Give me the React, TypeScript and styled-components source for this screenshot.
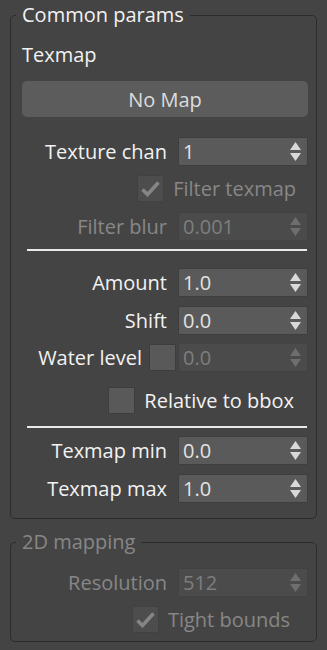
import React from 'react';
import styled, { createGlobalStyle } from 'styled-components';

const Global = createGlobalStyle`
  html, body { margin: 0; padding: 0; background: #444444; }
  body {
    font-family: "Open Sans", "Noto Sans", sans-serif;
    font-size: 20px;
    color: #f2f2f2;
  }
  * { box-sizing: border-box; }
`;

const Panel = styled.div`
  display: flex;
  flex-direction: column;
  gap: 12px;
  padding: 4px 10px 0;
`;

const Group = styled.fieldset<{ $pb: number }>`
  margin: 0;
  min-width: 0;
  border: 1px solid #2c2c2c;
  border-radius: 5px;
  padding: 15px 8px ${(p) => p.$pb}px 11px;
  display: flex;
  flex-direction: column;
  gap: 9px;
`;

const Legend = styled.legend<{ $dim?: boolean }>`
  padding: 0 6px;
  margin-left: -6px;
  line-height: 22px;
  color: ${(p) => (p.$dim ? '#878787' : '#f2f2f2')};
`;

const Heading = styled.div`
  line-height: 27px;
  color: #f2f2f2;
`;

const MapButton = styled.button`
  margin-top: 4px;
  height: 36px;
  width: 100%;
  border: none;
  border-radius: 5px;
  background: #5c5c5c;
  color: #dcdcdc;
  font: inherit;
  padding: 0;
`;

const Row = styled.div<{ $mt?: number; $tight?: boolean }>`
  display: grid;
  grid-template-columns: 1fr 130px;
  column-gap: ${(p) => (p.$tight ? 2 : 11)}px;
  align-items: center;
  height: 29px;
  margin-top: ${(p) => p.$mt ?? 0}px;
`;

const Label = styled.div<{ $dim?: boolean }>`
  display: flex;
  justify-content: flex-end;
  align-items: center;
  gap: 7px;
  white-space: nowrap;
  color: ${(p) => (p.$dim ? '#878787' : '#f2f2f2')};
`;

const SpinBox = styled.div<{ $dim?: boolean }>`
  display: flex;
  align-items: center;
  height: 29px;
  background: ${(p) => (p.$dim ? '#4b4b4b' : '#5a5a5a')};
  border: 1px solid ${(p) => (p.$dim ? '#424242' : '#3e3e3e')};
  border-radius: 2px;
  padding: 0 6px 0 4px;
  color: ${(p) => (p.$dim ? '#7e7e7e' : '#e2e2e2')};
`;

const SpinValue = styled.span`
  flex: 1;
  line-height: 27px;
`;

const Arrows = styled.svg`
  flex: none;
  display: block;
`;

const CheckRow = styled.label<{ $mt?: number; $pr: number }>`
  display: flex;
  justify-content: flex-end;
  align-items: center;
  gap: 9px;
  height: 27px;
  padding-right: ${(p) => p.$pr}px;
  margin-top: ${(p) => p.$mt ?? 0}px;
`;

const CheckText = styled.span<{ $dim?: boolean }>`
  color: ${(p) => (p.$dim ? '#878787' : '#f2f2f2')};
  white-space: nowrap;
`;

const Box = styled.span<{ $dim?: boolean }>`
  flex: none;
  width: 27px;
  height: 27px;
  display: flex;
  align-items: center;
  justify-content: center;
  background: ${(p) => (p.$dim ? '#4d4d4d' : '#595959')};
  border: 1px solid ${(p) => (p.$dim ? '#414141' : '#3d3d3d')};
  border-radius: 1px;
`;

const Separator = styled.div<{ $mt?: number }>`
  height: 2px;
  margin: ${(p) => p.$mt ?? 0}px 1px 0 5px;
  background: #e9e9e9;
`;

const Check = ({ color }: { color: string }) => (
  <svg width="19" height="17" viewBox="0 0 19 17">
    <path d="M1.5 9.5 L6.5 14.5 L17.5 2.5" fill="none" stroke={color} strokeWidth="3.6" strokeLinejoin="miter" />
  </svg>
);

const Spinner = ({ value, dim }: { value: string; dim?: boolean }) => {
  const c = dim ? '#6e6e6e' : '#d8d8d8';
  return (
    <SpinBox $dim={dim}>
      <SpinValue>{value}</SpinValue>
      <Arrows width="11" height="20" viewBox="0 0 11 20">
        <polygon points="5.5,0 11,8 0,8" fill={c} />
        <polygon points="0,11 11,11 5.5,19" fill={c} />
      </Arrows>
    </SpinBox>
  );
};

const CheckBox = ({ checked, dim }: { checked?: boolean; dim?: boolean }) => (
  <Box $dim={dim}>{checked && <Check color={dim ? '#858585' : '#e0e0e0'} />}</Box>
);

export default function App() {
  return (
    <>
      <Global />
      <Panel>
        <Group $pb={15}>
          <Legend>Common params</Legend>
          <Heading>Texmap</Heading>
          <MapButton>No Map</MapButton>
          <Row $mt={11}>
            <Label>Texture chan</Label>
            <Spinner value="1" />
          </Row>
          <CheckRow $pr={12}>
            <CheckBox checked dim />
            <CheckText $dim>Filter texmap</CheckText>
          </CheckRow>
          <Row $mt={1}>
            <Label $dim>Filter blur</Label>
            <Spinner value="0.001" dim />
          </Row>
          <Separator $mt={-1} />
          <Row $mt={8}>
            <Label>Amount</Label>
            <Spinner value="1.0" />
          </Row>
          <Row>
            <Label>Shift</Label>
            <Spinner value="0.0" />
          </Row>
          <Row $mt={-1} $tight>
            <Label>
              Water level
              <CheckBox />
            </Label>
            <Spinner value="0.0" dim />
          </Row>
          <CheckRow $mt={6} $pr={14}>
            <CheckBox />
            <CheckText>Relative to bbox</CheckText>
          </CheckRow>
          <Separator $mt={3} />
          <Row $mt={-1}>
            <Label>Texmap min</Label>
            <Spinner value="0.0" />
          </Row>
          <Row>
            <Label>Texmap max</Label>
            <Spinner value="1.0" />
          </Row>
        </Group>
        <Group $pb={8}>
          <Legend $dim>2D mapping</Legend>
          <Row>
            <Label $dim>Resolution</Label>
            <Spinner value="512" dim />
          </Row>
          <CheckRow $pr={18}>
            <CheckBox checked dim />
            <CheckText $dim>Tight bounds</CheckText>
          </CheckRow>
        </Group>
      </Panel>
    </>
  );
}
